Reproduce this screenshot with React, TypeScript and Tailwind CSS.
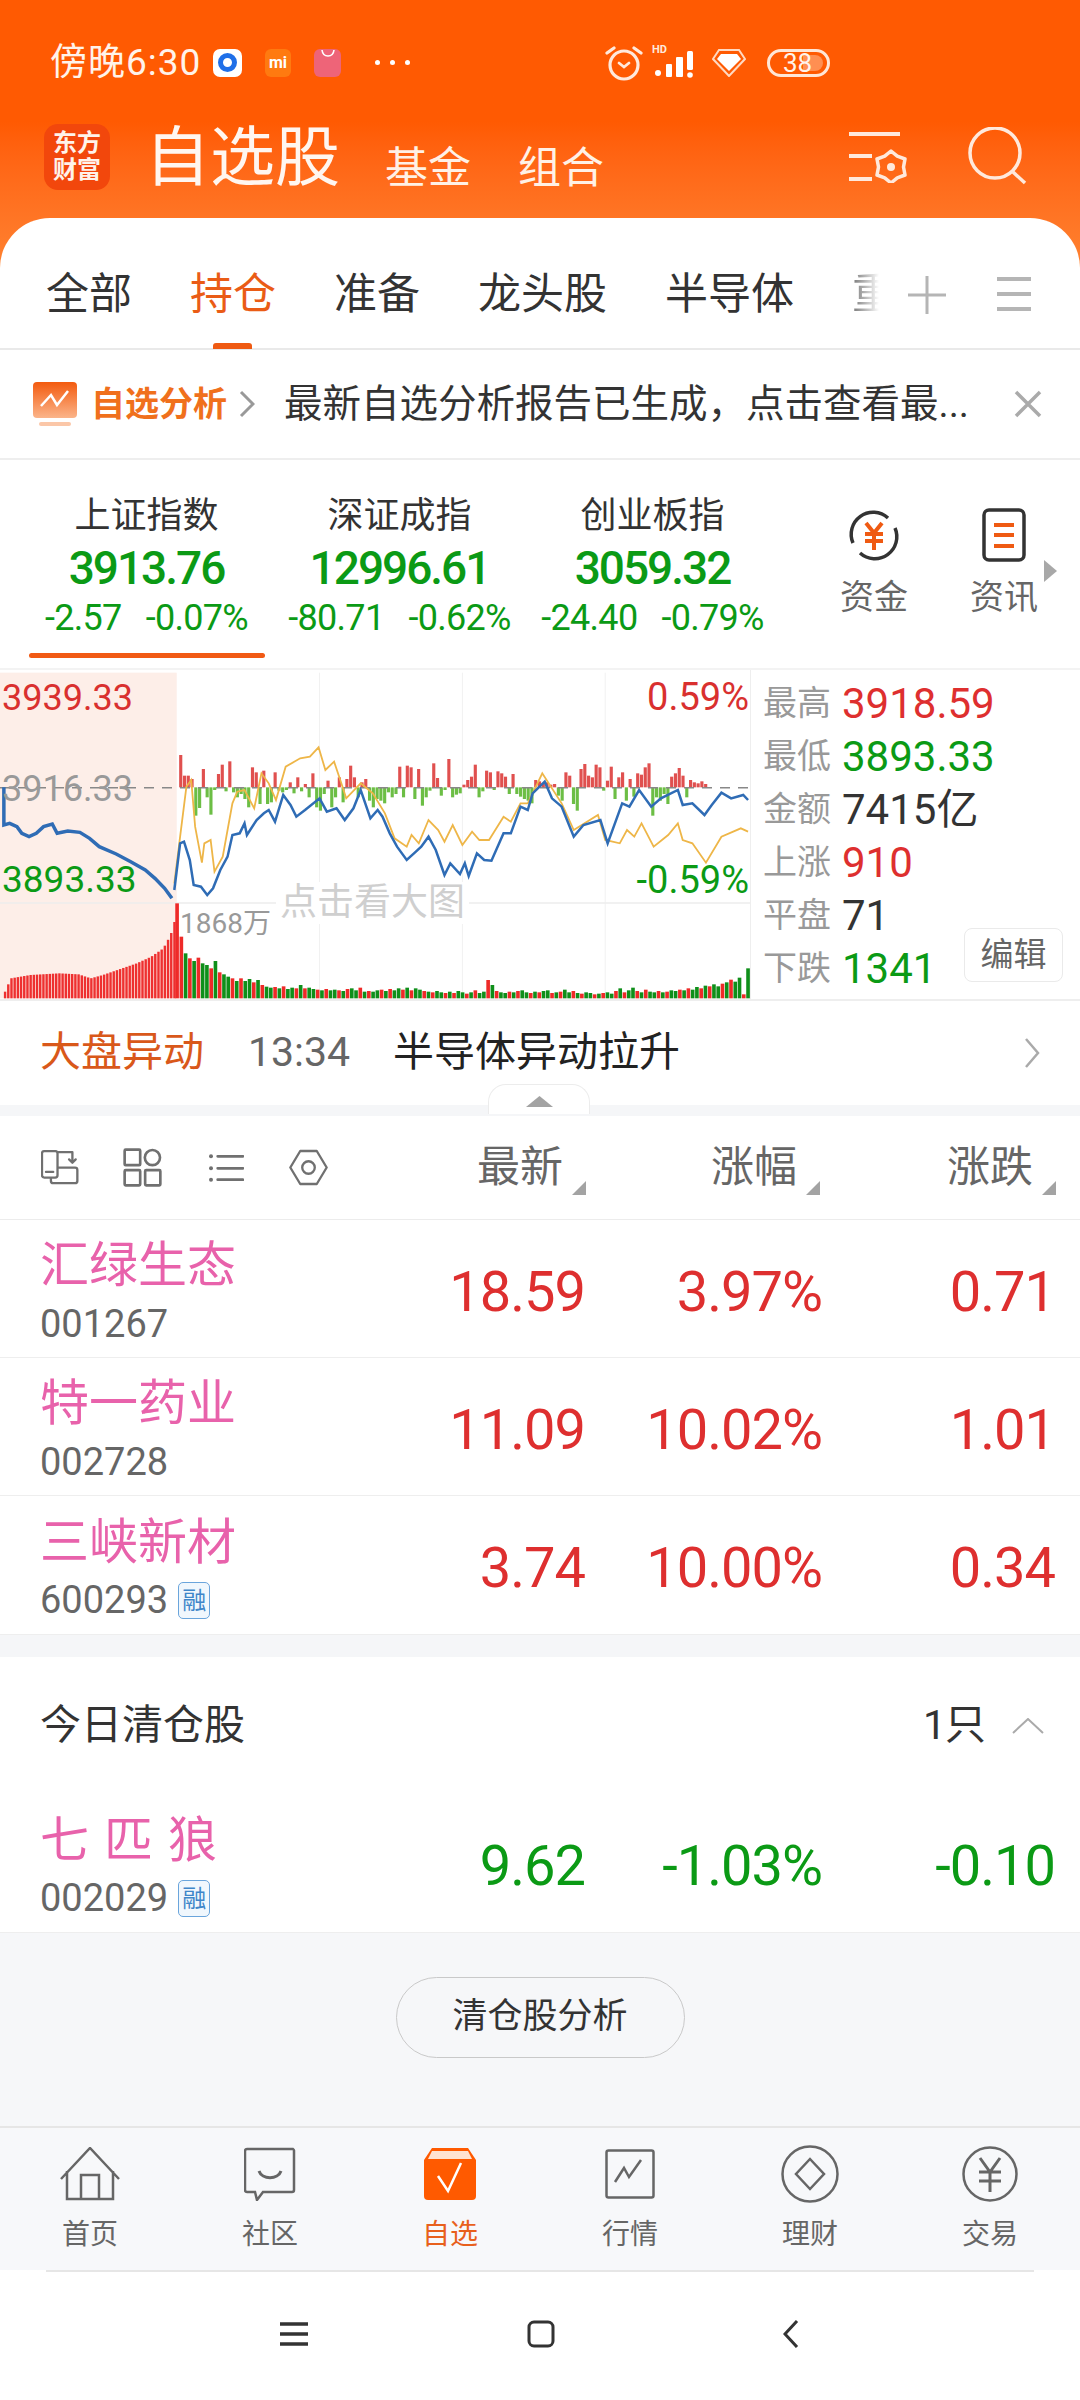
import type { ReactNode } from "react";

const RED = "text-[#de2f2f]";
const GREEN = "text-[#0b9a15]";

const blueLine =
  "8,352 8,465 20,460 35,470 45,490 60,500 75,490 90,470 108,462 118,490 140,483 165,487 185,505 205,530 240,552 270,575 300,600 320,625 340,655 355,685";
const blueLine2 =
  "360,660 372,520 380,515 392,570 400,645 415,650 428,675 440,655 455,600 470,560 480,495 495,490 505,460 510,495 530,450 545,430 555,420 568,455 585,375 600,405 612,440 630,420 660,385 675,425 695,415 712,450 730,415 745,360 765,445 780,420 790,440 805,490 820,530 840,570 855,550 870,530 885,500 900,540 918,615 930,580 950,612 960,580 968,618 985,550 1000,570 1015,572 1040,490 1055,490 1075,410 1090,420 1100,370 1125,335 1140,385 1160,410 1185,500 1205,465 1240,450 1255,520 1285,400 1300,410 1320,360 1345,410 1365,385 1400,360 1410,405 1430,400 1455,435 1470,405 1490,368 1510,385 1535,375 1545,390";
const yellowLine =
  "360,640 372,500 385,350 395,330 403,470 417,578 422,520 435,510 443,605 460,560 480,400 490,365 505,360 525,415 540,310 555,340 570,390 590,290 620,265 640,260 658,232 672,300 690,275 705,340 715,385 745,340 770,370 795,430 815,505 840,530 850,495 865,520 885,450 905,480 918,515 935,465 955,525 975,485 990,510 1010,510 1040,440 1055,455 1075,400 1090,400 1120,310 1160,400 1185,480 1235,435 1250,510 1280,520 1295,480 1310,500 1325,460 1350,530 1380,495 1400,460 1410,510 1430,520 1458,578 1490,500 1530,475 1545,485";

// net flow bars, up is red and down is green
const flow = [
  97, 35, 35, 25, -85, -62, 55, -30, -82, -8, 40, 68, -12, 78, -15, -30, -20, -35, -60, 60, 45, -50, 50, -50, -45, 45, -10, -15, -8, 15,
  -18, 30, -12, 10, -30, 42, -60, -70, -20, 20, -60, -30, 30, -45, 25, 65, 30, -30, 15, 25, -40, -60, -35, -40, -48, -15, -30, -20, 62, -30,
  65, 60, -35, 55, -55, -30, -10, 72, 28, -25, -8, 85, -30, -22, -18, 8, 22, 32, 68, -30, -12, 50, 45, -8, 48, 42, 32, -20, 40, -20,
  -28, -35, -40, -48, 22, 18, 12, 15, 8, 10, -25, -40, 45, 35, -50, -70, 55, 70, 35, 30, 68, 60, -10, 20, 62, -35, 30, 45, -40, 25,
  -28, 42, 38, 60, 72, -85, -30, -40, -20, -50, 32, 42, 58, 35, -30, 22, 15, 12, 18, 10,
];

const pre = [
  [8, 20], [20, 60], [60, 70], [120, 75], [160, 72], [185, 60], [210, 70], [240, 85], [280, 105], [310, 125], [335, 150], [350, 190], [360, 240],
];
const preVol = Array.from({ length: 54 }, (_, i) => {
  const x = 8 + i * 6.6;
  const n = pre.findIndex((p) => p[0] >= x);
  const [x0, y0] = pre[Math.max(n - 1, 0)];
  const [x1, y1] = pre[n < 0 ? pre.length - 1 : n];
  return { x, h: x1 === x0 ? y1 : y0 + ((y1 - y0) * (x - x0)) / (x1 - x0) };
});

const afterVol = [
  285, 185, 135, 120, 112, 122, 105, 100, 90, 112, 78, 72, 65, 60, 52, 60, 52, 58, 48, 55, 40, 35, 32, 34, 30, 36, 28, 32, 30, 40,
  30, 32, 28, 26, 24, 28, 24, 26, 24, 22, 28, 30, 24, 32, 20, 22, 20, 24, 26, 22, 28, 24, 30, 26, 32, 24, 30, 26, 22, 20,
  18, 22, 18, 16, 20, 16, 22, 18, 14, 18, 24, 16, 20, 55, 40, 22, 18, 16, 20, 18, 22, 24, 18, 16, 20, 18, 22, 24, 16, 18,
  20, 26, 18, 22, 16, 14, 18, 16, 12, 14, 16, 18, 14, 22, 30, 18, 24, 32, 22, 18, 26, 20, 18, 22, 18, 20, 24, 22, 26, 24,
  30, 26, 34, 30, 38, 36, 42, 36, 44, 48, 56, 50, 62, 12, 90,
];

function Chart() {
  return (
    <svg viewBox="0 0 1549 987" preserveAspectRatio="none" className="absolute inset-0 w-full h-full">
      <rect x="0" y="8" width="365" height="977" fill="#fdeee8" />
      {[660, 955, 1250].map((x) => (
        <line key={x} x1={x} x2={x} y1="8" y2="985" stroke="#f1f1f1" strokeWidth="1" vectorEffect="non-scaling-stroke" />
      ))}
      <line x1="0" x2="1549" y1="699" y2="699" stroke="#ececec" strokeWidth="1.5" vectorEffect="non-scaling-stroke" />
      {flow.map((v, i) => (
        <rect key={i} x={370 + i * 7.8} y={v > 0 ? 352 - v : 352} width="6.5" height={Math.abs(v)} fill={v > 0 ? "#e0504f" : "#6cbe45"} />
      ))}
      <line x1="0" x2="1549" y1="353" y2="353" stroke="#888" strokeWidth="1.5" strokeDasharray="10 8" vectorEffect="non-scaling-stroke" />
      <polyline points={yellowLine} fill="none" stroke="#eeb648" strokeWidth="1.8" vectorEffect="non-scaling-stroke" />
      <polyline points={blueLine} fill="none" stroke="#2f6cb5" strokeWidth="3.5" vectorEffect="non-scaling-stroke" />
      <polyline points={blueLine2} fill="none" stroke="#2f6cb5" strokeWidth="2.5" vectorEffect="non-scaling-stroke" />
      {preVol.map((b) => (
        <rect key={b.x} x={b.x} y={985 - b.h} width="5" height={b.h} fill="#ee3030" />
      ))}
      {afterVol.map((h, i) => (
        <rect key={i} x={362 + i * 8.8} y={985 - h} width="7.5" height={h} fill={i < 2 || (i * 7) % 5 < 2 ? "#ee2a28" : "#0f8f1a"} />
      ))}
    </svg>
  );
}

function StatRow({ label, value, color }: { label: string; value: string; color: string }) {
  return (
    <div className="h-[53px] flex items-center">
      <span className="w-[69px] text-[34px] text-[#999]">{label}</span>
      <span className={`ml-[10px] text-[42px] ${color}`}>{value}</span>
    </div>
  );
}

function IndexCol({ name, value, a, b, active }: { name: string; value: string; a: string; b: string; active?: boolean }) {
  return (
    <div className="w-[253px] flex flex-col items-center">
      <div className="h-[36px] mt-[38px] flex items-center text-[36px] text-[#333]">{name}</div>
      <div className={`h-[40px] mt-[14px] flex items-center text-[46px] font-medium tracking-[-2px] ${GREEN}`}>{value}</div>
      <div className={`h-[34px] mt-[13px] flex items-center gap-[24px] text-[36px] tracking-[-0.7px] ${GREEN}`}>
        <span>{a}</span>
        <span>{b}</span>
      </div>
      <div className={`w-[236px] h-[5px] mt-[18px] rounded-full ${active ? "bg-[#f15a14]" : ""}`} />
    </div>
  );
}

function Corner() {
  return (
    <svg width="14" height="14" viewBox="0 0 14 14" className="ml-[9px] self-end mb-[5px]">
      <polygon points="14,0 14,14 0,14" fill="#a3a3a3" />
    </svg>
  );
}

function StockRow({ name, code, rong, vals, color, wide }: { name: string; code: string; rong?: boolean; vals: string[]; color: string; wide?: boolean }) {
  return (
    <div className="h-[138px] pl-[40px] flex items-center bg-white">
      <div className="w-[300px] flex flex-col pt-[9px]">
        <div className={`h-[52px] flex items-center text-[49px] text-[#e862ab] ${wide ? "tracking-[15px]" : ""}`}>{name}</div>
        <div className="h-[44px] mt-[10px] flex items-center text-[38px] text-[#666]">
          {code}
          {rong && (
            <span className="ml-[10px] w-[32px] h-[37px] flex items-center justify-center rounded-[5px] border border-[#6aa5dc] bg-[#f0f7fd] text-[24px] text-[#3f86c9]">
              融
            </span>
          )}
        </div>
      </div>
      <div className={`w-[245px] mt-[6px] text-right text-[56px] tracking-[-1px] ${color}`}>{vals[0]}</div>
      <div className={`w-[237px] mt-[6px] text-right text-[56px] tracking-[-1px] ${color}`}>{vals[1]}</div>
      <div className={`w-[233px] mt-[6px] text-right text-[56px] tracking-[-1px] ${color}`}>{vals[2]}</div>
    </div>
  );
}

function NavItem({ label, active, children }: { label: string; active?: boolean; children: ReactNode }) {
  return (
    <div className="w-[180px] flex flex-col items-center">
      <div className="h-[60px] flex items-center justify-center">{children}</div>
      <div className={`mt-[14px] h-[34px] flex items-center text-[28px] ${active ? "text-[#e8601c]" : "text-[#666]"}`}>{label}</div>
    </div>
  );
}

function StatusIcons() {
  return (
    <div className="ml-[195px] flex items-center">
      <svg width="38" height="36" viewBox="0 0 38 36" fill="none" stroke="#ffe9dc" strokeWidth="3.2" strokeLinecap="round">
        <circle cx="19" cy="20" r="14" />
        <path d="M14 18l5 4 5-4" strokeWidth="2.8" />
        <path d="M2 8l7-5M36 8l-7-5" />
      </svg>
      <div className="ml-[9px] relative w-[42px] h-[36px]">
        <span className="absolute left-0 top-[-1px] text-[11px] leading-[12px] font-bold text-[#ffe9dc]">HD</span>
        <svg width="42" height="36" viewBox="0 0 42 36" fill="#fff">
          <circle cx="6" cy="28" r="3" />
          <rect x="14" y="19" width="6" height="13" rx="1" />
          <rect x="24" y="12" width="7" height="20" rx="1" />
          <rect x="35" y="6" width="6" height="19" rx="1.5" />
          <circle cx="38" cy="30" r="2.8" />
        </svg>
      </div>
      <svg width="34" height="28" viewBox="0 0 34 28" className="ml-[18px]">
        <path d="M7 1h20l6 9-16 17L1 10z" fill="none" stroke="#ffd9c2" strokeWidth="2" />
        <path d="M9 5h16l4 5-12 12L5 10z" fill="#fff" />
      </svg>
      <div className="ml-[21px] relative w-[63px] h-[28px] rounded-full border-[3px] border-[#ffe6d6] overflow-hidden flex items-center">
        <div className="absolute right-[4px] top-[3px] bottom-[3px] w-[20px] rounded-r-full bg-[#ff8f52]" />
        <span className="relative ml-[13px] text-[26px] leading-none text-[#fff3ea]">38</span>
      </div>
    </div>
  );
}

export default function App() {
  return (
    <div className="w-[1080px] h-[2400px] overflow-hidden flex flex-col bg-white font-['Roboto','Noto_Sans_CJK_SC',sans-serif]">
      <div className="h-[270px] shrink-0 bg-gradient-to-b from-[#ff5a02] via-[#ff5a02] via-45% to-[#ff8230] text-white">
        <div className="h-[63px] pt-[31px] pl-[50px] flex items-center box-content">
          <span className="w-[150px] text-[37px] tracking-[1px] text-[#fff3ea] whitespace-nowrap">傍晚6:30</span>
          <div className="ml-[13px] w-[29px] h-[28px] rounded-[7px] bg-white flex items-center justify-center">
            <div className="w-[19px] h-[19px] rounded-full border-[5px] border-[#1f6fe8]" />
          </div>
          <div className="ml-[23px] w-[26px] h-[28px] rounded-[6px] bg-[#ff7a10] flex items-center justify-center text-[16px] font-bold leading-none">mi</div>
          <div className="ml-[23px] w-[27px] h-[28px] rounded-[6px] bg-[#ee6478] flex justify-center">
            <svg width="16" height="10" viewBox="0 0 16 10" fill="none" stroke="#fff" strokeWidth="1.6">
              <path d="M2 1c1 8 11 8 12 0" />
            </svg>
          </div>
          <div className="ml-[34px] flex gap-[10px]">
            <i className="w-[5px] h-[5px] rounded-full bg-white" />
            <i className="w-[5px] h-[5px] rounded-full bg-white" />
            <i className="w-[5px] h-[5px] rounded-full bg-white" />
          </div>
          <StatusIcons />
        </div>
        <div className="h-[66px] mt-[30px] pl-[44px] flex items-center">
          <div className="w-[66px] h-[66px] rounded-[14px] bg-[#f2470c] flex flex-col items-center justify-center text-[24px] font-bold leading-[27px] text-[#fff3ea]">
            <span>东方</span>
            <span>财富</span>
          </div>
          <span className="ml-[35px] mt-[2px] text-[65px] leading-none text-[#fff6f0]">自选股</span>
          <span className="ml-[45px] self-end text-[43px] leading-none text-[#fff1e6]">基金</span>
          <span className="ml-[47px] self-end text-[43px] leading-none text-[#fff1e6]">组合</span>
          <svg width="62" height="52" viewBox="0 0 62 52" fill="none" stroke="#ffe9dc" className="ml-[245px]">
            <path d="M0 3h51M0 25h23M0 48h23" strokeWidth="4" />
            <path d="M42 20l6.25 5.2L56 28l-1.5 8 1.5 8-7.75 2.8L42 52l-6.25-5.2L28 44l1.5-8-1.5-8 7.75-2.8z" strokeWidth="3.5" strokeLinejoin="round" />
            <circle cx="42" cy="36" r="4" fill="#ffe9dc" stroke="none" />
          </svg>
          <svg width="60" height="60" viewBox="0 0 60 60" fill="none" stroke="#ffe9dc" strokeWidth="3.5" className="ml-[57px]">
            <circle cx="27" cy="26" r="25" />
            <path d="M45 45l12 11" />
          </svg>
        </div>
      </div>

      <div className="mt-[-52px] relative rounded-t-[50px] bg-white shrink-0">
        <div className="h-[132px] pt-[22px] pl-[46px] flex items-center gap-[58px] text-[43px] text-[#333] border-b-2 border-[#e9e9e9] relative">
          <span>全部</span>
          <span className="text-[#ea5c16]">持仓</span>
          <span>准备</span>
          <span>龙头股</span>
          <span>半导体</span>
          <span className="w-[27px] overflow-hidden whitespace-nowrap bg-gradient-to-r from-[#777] to-white bg-clip-text text-transparent">重</span>
          <div className="absolute left-[213px] bottom-[-1px] w-[39px] h-[6px] rounded-t-[3px] bg-[#ef5a12]" />
          <svg width="38" height="38" viewBox="0 0 38 38" stroke="#b5b5b5" strokeWidth="3" className="absolute left-[908px] top-[58px]">
            <path d="M0 19h38M19 0v38" />
          </svg>
          <svg width="34" height="36" viewBox="0 0 34 36" stroke="#b5b5b5" strokeWidth="4" className="absolute left-[997px] top-[58px]">
            <path d="M0 3h34M0 18h34M0 33h34" />
          </svg>
        </div>

        <div className="h-[110px] flex items-center border-b-2 border-[#eeeeee]">
          <svg width="44" height="44" viewBox="0 0 44 44" className="ml-[33px]">
            <defs>
              <linearGradient id="bn" x1="0" y1="0" x2="0" y2="1">
                <stop offset="0" stopColor="#f35a0e" />
                <stop offset="1" stopColor="#fbb48a" />
              </linearGradient>
            </defs>
            <rect width="44" height="36" rx="4" fill="url(#bn)" />
            <path d="M8 24l10-11 6 10 11-14" fill="none" stroke="#fff" strokeWidth="2.5" />
            <rect x="6" y="40" width="32" height="4" rx="2" fill="#fbc7a8" />
          </svg>
          <span className="ml-[14px] text-[34px] font-bold text-[#f0701c] whitespace-nowrap">自选分析</span>
          <svg width="16" height="30" viewBox="0 0 16 30" fill="none" stroke="#999" strokeWidth="3" className="ml-[12px]">
            <path d="M2 3l12 12L2 27" />
          </svg>
          <span className="ml-[29px] w-[692px] text-[38.5px] text-[#333] whitespace-nowrap">最新自选分析报告已生成，点击查看最...</span>
          <svg width="28" height="28" viewBox="0 0 28 28" stroke="#aaa" strokeWidth="3.5" className="ml-[38px]">
            <path d="M2 2l24 24M26 2L2 26" />
          </svg>
        </div>

        <div className="h-[210px] pl-[20px] flex relative border-b-2 border-[#f3f3f3]">
          <IndexCol name="上证指数" value="3913.76" a="-2.57" b="-0.07%" active />
          <IndexCol name="深证成指" value="12996.61" a="-80.71" b="-0.62%" />
          <IndexCol name="创业板指" value="3059.32" a="-24.40" b="-0.79%" />
          <div className="w-[290px] pl-[30px] pt-[48px] flex">
            <div className="w-[130px] flex flex-col items-center">
              <svg width="54" height="54" viewBox="0 0 54 54" fill="none">
                <path d="M6 35a22 22 0 0 1 35-25M48 20a22 22 0 0 1-35 25" stroke="#333" strokeWidth="3.5" />
                <path d="M19 15l8 10 8-10M18 26h18M18 33h18M27 25v17" stroke="#ef5a12" strokeWidth="4" />
              </svg>
              <span className="mt-[13px] text-[34px] leading-[44px] text-[#666]">资金</span>
            </div>
            <div className="w-[130px] flex flex-col items-center">
              <svg width="44" height="54" viewBox="0 0 44 54" fill="none">
                <rect x="2" y="2" width="40" height="50" rx="5" stroke="#333" strokeWidth="3.5" />
                <path d="M12 17h20M12 27h20M12 38h20" stroke="#ef5a12" strokeWidth="4" />
              </svg>
              <span className="mt-[13px] text-[34px] leading-[44px] text-[#666]">资讯</span>
            </div>
          </div>
          <svg width="13" height="22" viewBox="0 0 13 22" className="absolute left-[1044px] top-[100px]">
            <polygon points="0,0 13,11 0,22" fill="#a8a8a8" />
          </svg>
        </div>

        <div className="h-[331px] flex border-b-2 border-[#eeeeee] bg-white">
          <div className="relative w-[751px] h-full border-r border-[#eeeeee]">
            <Chart />
            <span className="absolute left-[2px] top-[8px] text-[36px] leading-[40px] text-[#d9302f]">3939.33</span>
            <span className="absolute right-[1px] top-[7px] text-[38px] leading-[40px] text-[#d9302f]">0.59%</span>
            <span className="absolute left-[2px] top-[99px] text-[36px] leading-[40px] text-[#999]">3916.33</span>
            <span className={`absolute left-[2px] top-[190px] text-[37px] leading-[40px] ${GREEN}`}>3893.33</span>
            <span className={`absolute right-[1px] top-[190px] text-[38px] leading-[40px] ${GREEN}`}>-0.59%</span>
            <span className="absolute left-[276px] top-[212px] px-[4px] bg-white text-[37px] leading-[42px] text-[#cfcfcf] whitespace-nowrap">点击看大图</span>
            <span className="absolute left-[180px] top-[237px] text-[28px] leading-[34px] text-[#999] whitespace-nowrap">1868万</span>
          </div>
          <div className="relative flex-1 pl-[12px] pt-[7px]">
            <StatRow label="最高" value="3918.59" color={RED} />
            <StatRow label="最低" value="3893.33" color={GREEN} />
            <StatRow label="金额" value="7415亿" color="text-[#333]" />
            <StatRow label="上涨" value="910" color={RED} />
            <StatRow label="平盘" value="71" color="text-[#333]" />
            <StatRow label="下跌" value="1341" color={GREEN} />
            <div className="absolute left-[213px] top-[258px] w-[99px] h-[54px] rounded-[8px] border border-[#eaeaea] bg-white flex items-center justify-center text-[33px] text-[#666]">
              编辑
            </div>
          </div>
        </div>

        <div className="h-[104px] pl-[40px] flex items-center text-[41px] relative">
          <span className="text-[#d9581a]">大盘异动</span>
          <span className="ml-[44px] w-[145px] text-[#666]">13:34</span>
          <span className="text-[#222]">半导体异动拉升</span>
          <svg width="16" height="32" viewBox="0 0 16 32" fill="none" stroke="#aaa" strokeWidth="2.5" className="absolute left-[1024px] top-[36px]">
            <path d="M2 2l12 14L2 30" />
          </svg>
        </div>
        <div className="h-[11px] bg-[#f5f6f8] relative">
          <div className="absolute left-[488px] top-[-21px] w-[102px] h-[30px] rounded-t-[18px] border border-b-0 border-[#ececec] bg-white flex justify-center pt-[11px]">
            <svg width="27" height="11" viewBox="0 0 27 11">
              <polygon points="13.5,0 27,11 0,11" fill="#a3a3a3" />
            </svg>
          </div>
        </div>

        <div className="h-[104px] pl-[41px] flex items-center border-b border-[#ececec] text-[43px] text-[#666]">
          <svg width="38" height="35" viewBox="35 32 115 105" fill="none" stroke="#707070" strokeWidth="7" strokeLinecap="round" strokeLinejoin="round">
            <rect x="38" y="35" width="47" height="80" rx="7" />
            <path d="M50 98h22M88 38h42v28M120 60l10 10 10-10M88 85h50a7 7 0 0 1 7 7v33a7 7 0 0 1-7 7H72a7 7 0 0 1-7-7v-8" />
          </svg>
          <svg width="39" height="39" viewBox="280 25 118 118" fill="none" stroke="#707070" strokeWidth="8" className="ml-[44px]">
            <rect x="285" y="30" width="47" height="47" rx="3" />
            <circle cx="369" cy="54" r="23" />
            <rect x="285" y="92" width="47" height="46" rx="3" />
            <rect x="347" y="92" width="46" height="46" rx="3" />
          </svg>
          <svg width="36" height="30" viewBox="533 38 108 90" className="ml-[46px]">
            <g fill="#707070">
              <circle cx="542" cy="48" r="6" />
              <circle cx="542" cy="84" r="6" />
              <circle cx="542" cy="118" r="6" />
            </g>
            <path d="M562 48h76M562 84h76M562 118h76" stroke="#707070" strokeWidth="8" strokeLinecap="round" />
          </svg>
          <svg width="39" height="37" viewBox="778 28 118 110" fill="none" stroke="#707070" strokeWidth="7" strokeLinejoin="round" className="ml-[45px]">
            <path d="M782 83l30-50h50l30 50-30 50h-50z" />
            <circle cx="837" cy="83" r="19" />
          </svg>
          <div className="w-[258px] flex justify-end">
            <span>最新</span>
            <Corner />
          </div>
          <div className="w-[234px] flex justify-end">
            <span>涨幅</span>
            <Corner />
          </div>
          <div className="w-[236px] flex justify-end">
            <span>涨跌</span>
            <Corner />
          </div>
        </div>

        <div className="divide-y divide-[#eeeeee] border-b border-[#eeeeee]">
          <StockRow name="汇绿生态" code="001267" vals={["18.59", "3.97%", "0.71"]} color={RED} />
          <StockRow name="特一药业" code="002728" vals={["11.09", "10.02%", "1.01"]} color={RED} />
          <StockRow name="三峡新材" code="600293" rong vals={["3.74", "10.00%", "0.34"]} color={RED} />
        </div>
        <div className="h-[22px] bg-[#f5f6f8]" />

        <div className="h-[137px] px-[40px] flex items-center text-[41px] text-[#333]">
          <span>今日清仓股</span>
          <span className="ml-auto tracking-[-1px]">1只</span>
          <svg width="32" height="16" viewBox="0 0 32 16" fill="none" stroke="#aaa" strokeWidth="2" className="ml-[27px] mr-[-4px]">
            <path d="M1 15L16 1l15 14" />
          </svg>
        </div>
        <StockRow name="七匹狼" code="002029" rong vals={["9.62", "-1.03%", "-0.10"]} color={GREEN} wide />
      </div>

      <div className="h-[194px] shrink-0 bg-[#f6f7f9] border-t border-[#eeeeee] flex justify-center pt-[44px]">
        <div className="w-[289px] h-[81px] rounded-full border border-[#c9c9c9] flex items-center justify-center text-[35px] text-[#333]">清仓股分析</div>
      </div>

      <div className="h-[144px] shrink-0 bg-[#f7f8fa] border-t-2 border-[#e6e6e6] flex pt-[16px]">
        <NavItem label="首页">
          <svg width="60" height="54" viewBox="0 0 60 54" fill="none" stroke="#666" strokeWidth="2.5">
            <path d="M1 32L30 1l29 31M7 24v28h46V24M21 52V28h18v24" />
          </svg>
        </NavItem>
        <NavItem label="社区">
          <svg width="52" height="54" viewBox="0 0 52 54" fill="none" stroke="#666" strokeWidth="2.5">
            <path d="M3 2h46a2 2 0 0 1 1 2v39a2 2 0 0 1-2 2H19l-6 8-2-8H3a2 2 0 0 1-2-2V4a2 2 0 0 1 2-2z" />
            <path d="M15 24c3 9 19 9 22 0" strokeWidth="3" />
          </svg>
        </NavItem>
        <NavItem label="自选" active>
          <svg width="52" height="52" viewBox="0 0 52 52">
            <path d="M8 0h36l8 12v36a4 4 0 0 1-4 4H4a4 4 0 0 1-4-4V12z" fill="#ff5a00" />
            <path d="M8 3h36l4 8H4z" fill="#ffe3d2" />
            <path d="M14 28l10 15 13-28" fill="none" stroke="#fff" strokeWidth="2.5" />
          </svg>
        </NavItem>
        <NavItem label="行情">
          <svg width="50" height="50" viewBox="0 0 50 50" fill="none" stroke="#666" strokeWidth="2.5">
            <rect x="1.5" y="1.5" width="47" height="47" rx="2" />
            <path d="M10 33l9-14 5 9 12-17" />
          </svg>
        </NavItem>
        <NavItem label="理财">
          <svg width="58" height="58" viewBox="0 0 58 58" fill="none" stroke="#666" strokeWidth="2.5">
            <circle cx="29" cy="29" r="27.5" />
            <path d="M29 14l14 15-14 15-14-15z" />
          </svg>
        </NavItem>
        <NavItem label="交易">
          <svg width="56" height="56" viewBox="0 0 56 56" fill="none" stroke="#666" strokeWidth="2.5">
            <circle cx="28" cy="28" r="26.5" />
            <path d="M18 12l10 14 10-14M17 26h22M17 35h22M28 26v20" strokeWidth="3" />
          </svg>
        </NavItem>
      </div>

      <div className="flex-1 bg-white relative">
        <div className="mx-[46px] h-[2px] bg-[#e6e6e6]" />
        <svg width="28" height="24" viewBox="0 0 28 24" stroke="#333" strokeWidth="3.5" className="absolute left-[280px] top-[52px]">
          <path d="M0 2h28M0 12h28M0 22h28" />
        </svg>
        <svg width="28" height="28" viewBox="0 0 28 28" fill="none" stroke="#333" strokeWidth="3" className="absolute left-[527px] top-[50px]">
          <rect x="2" y="2" width="24" height="24" rx="5" />
        </svg>
        <svg width="16" height="28" viewBox="0 0 16 28" fill="none" stroke="#333" strokeWidth="3" className="absolute left-[783px] top-[50px]">
          <path d="M14 1L2 14l12 13" />
        </svg>
      </div>
    </div>
  );
}
